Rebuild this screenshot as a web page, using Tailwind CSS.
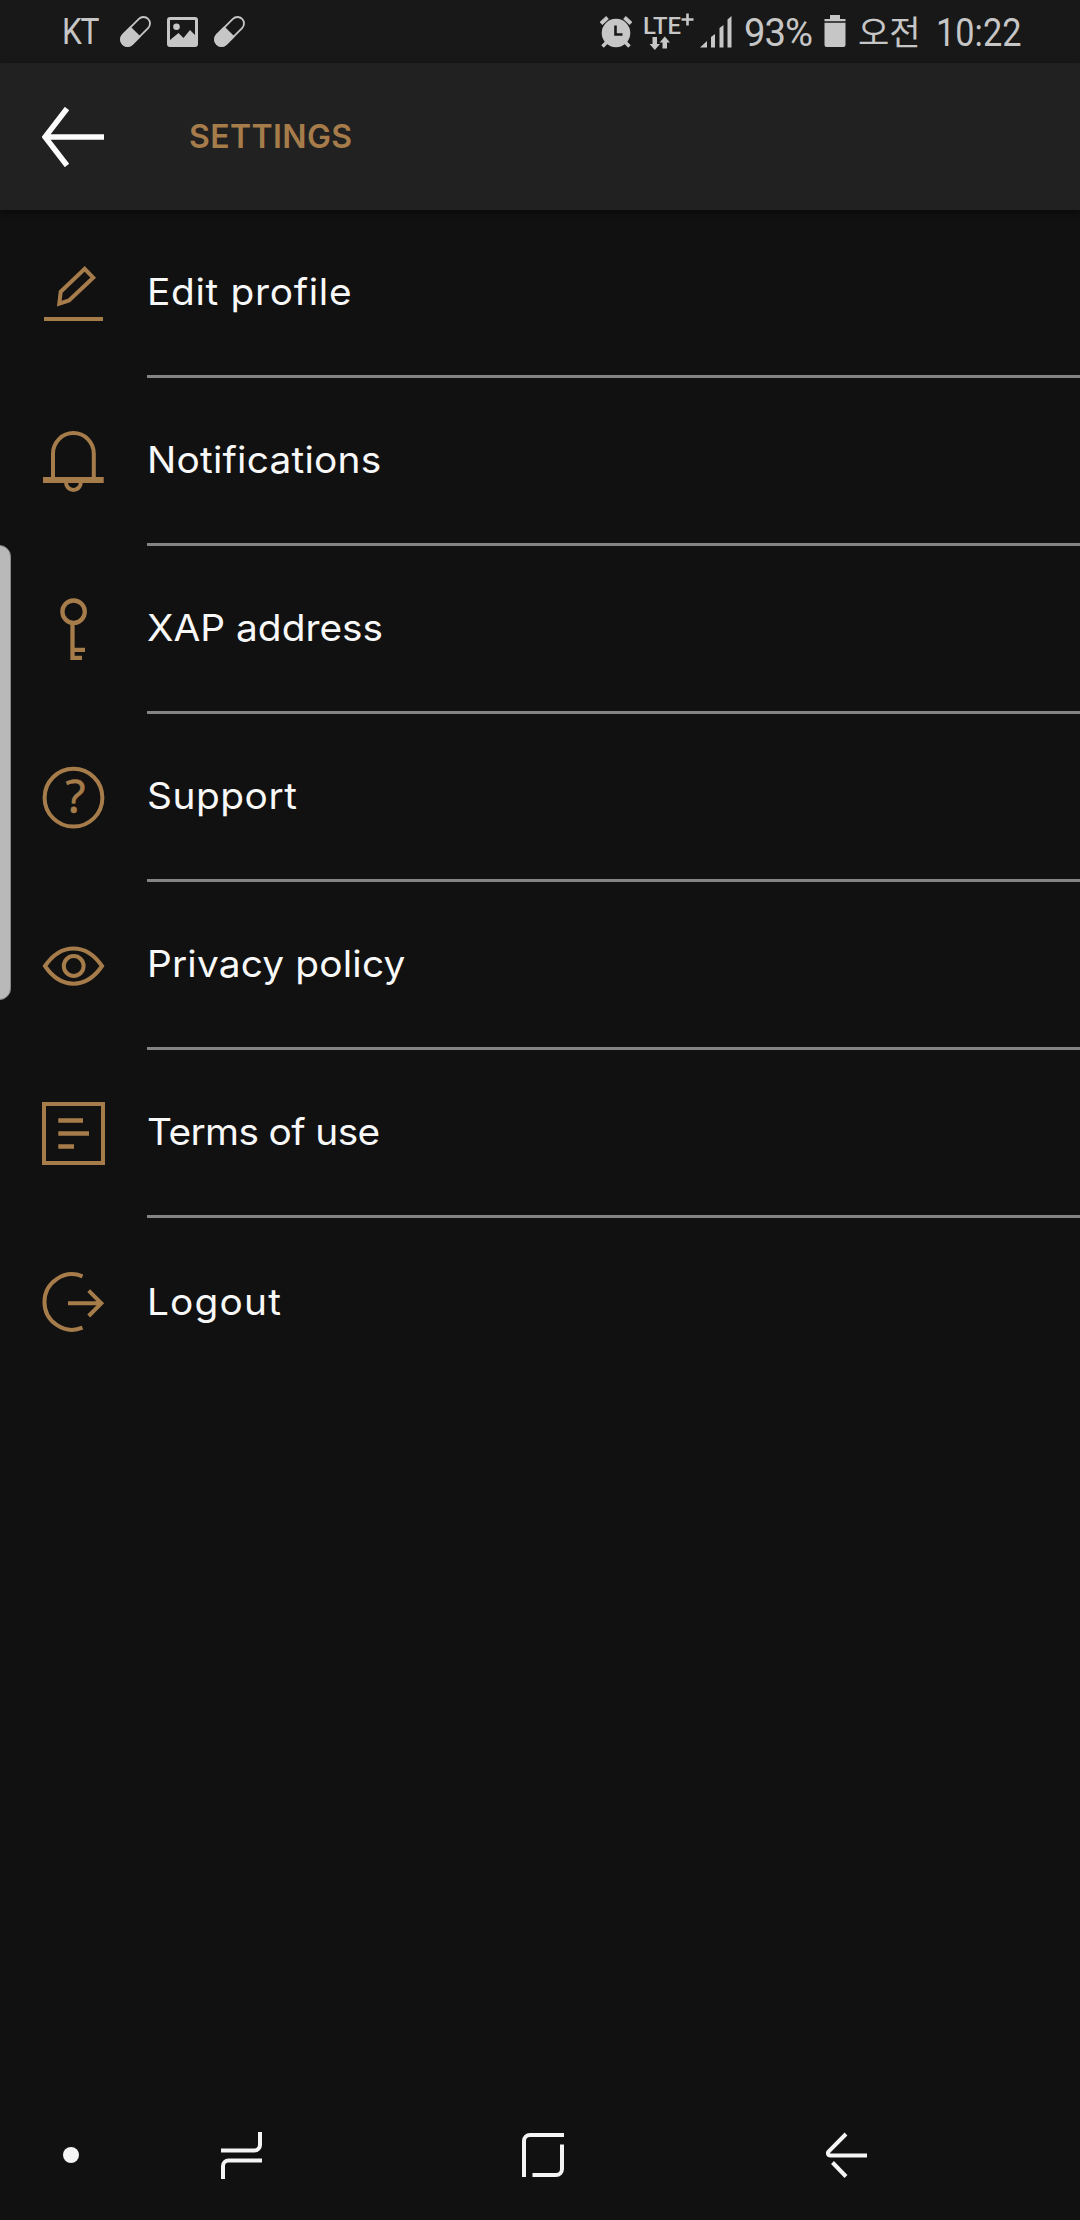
<!DOCTYPE html>
<html lang="en">
<head>
<meta charset="utf-8">
<title>Settings</title>
<script src="https://cdn.jsdelivr.net/npm/@tailwindcss/browser@4"></script>
</head>
<body class="bg-[#111111]">
<div class="relative flex h-[2220px] w-[1080px] flex-col overflow-hidden bg-[#111111] font-['Inter',sans-serif] text-[#f8f8f8]">

  <!-- Status bar -->
  <div class="flex h-[63px] shrink-0 items-center justify-between bg-[#181818] pr-[60px] pl-[62px] font-['Roboto','Noto_Sans_CJK_KR',sans-serif] text-[#c6c6c6]">
    <div class="flex items-center">
      <span class="w-[58px]"><span class="inline-block origin-left translate-y-px scale-x-[0.88] text-[36px] leading-[63px] font-normal tracking-[-1.5px]">KT</span></span>
      <svg class="h-[31px] w-[31px]" viewBox="0 0 31 31"><g transform="rotate(45 15.5 15.5)"><rect x="9" y="-2.3" width="13" height="35.6" rx="6.5" fill="none" stroke="#c6c6c6" stroke-width="1.8"/><path d="M8 15.5h15v11.2a7.5 7.5 0 0 1-15 0z" fill="#c6c6c6"/></g></svg>
      <svg class="ml-4 h-[30px] w-[31px]" viewBox="0 0 31 30"><path fill="#c6c6c6" fill-rule="evenodd" d="M3 0h25a3 3 0 0 1 3 3v24a3 3 0 0 1-3 3H3a3 3 0 0 1-3-3V3a3 3 0 0 1 3-3zM3 3v20l8.500-7 5 5 6.500-8 5 5V3z"/><circle cx="9.500" cy="9.700" r="3.300" fill="#c6c6c6"/></svg>
      <svg class="ml-4 h-[31px] w-[31px]" viewBox="0 0 31 31"><g transform="rotate(45 15.5 15.5)"><rect x="9" y="-2.3" width="13" height="35.6" rx="6.5" fill="none" stroke="#c6c6c6" stroke-width="1.8"/><path d="M8 15.5h15v11.2a7.5 7.5 0 0 1-15 0z" fill="#c6c6c6"/></g></svg>
    </div>
    <div class="flex items-center">
      <svg class="h-[32px] w-[32px]" viewBox="0 0 32 32"><g stroke="#c6c6c6" stroke-width="4" fill="none"><path d="M1 7.500 7.500 1.500M24.500 1.500 31 7.500"/><path stroke-width="3.500" d="M2.500 30.500 7 26M29.500 30.500 25 26"/></g><circle cx="16" cy="17" r="14.300" fill="#c6c6c6"/><path d="M15.500 9.500v9h7" fill="none" stroke="#181818" stroke-width="2.600"/></svg>
      <svg class="ml-[11px] h-[38px] w-[52px]" viewBox="0 0 52 38"><text x="0" y="21" font-family="Roboto" font-size="24" font-weight="500" fill="#c6c6c6" textLength="38" lengthAdjust="spacingAndGlyphs">LTE</text><path d="M38.500 6.500h12M44.500 .5v12" stroke="#c6c6c6" stroke-width="2.600"/><path fill="#c6c6c6" d="M9.500 24h4.500v7h3l-5.200 6-5.200-6h2.900zM19.500 35.500h4.500v-6h3l-5.200-6-5.200 6h2.900z"/></svg>
      <svg class="ml-[5px] h-[32px] w-[32px]" viewBox="0 0 32 32" fill="#c6c6c6"><path d="M0 31.500 7 25v6.500zM11 21l4-3v13.500h-4zM19.500 12l4-3v22.500h-4zM27.500 3.500 31.500 0v31.500h-4z"/></svg>
      <span class="ml-[12px] w-[80px] whitespace-nowrap"><span class="inline-block origin-left translate-y-[2px] scale-x-[0.98] text-[39px] leading-[63px] font-normal tracking-[-1px]">93%</span></span>
      <svg class="h-[33px] w-[22px]" viewBox="0 0 22 33" fill="#c6c6c6"><path d="M6 0h10v4h5.500v2.300H.5V4H6zM.5 7.700h21V30a2 2 0 0 1-2 2h-17a2 2 0 0 1-2-2z"/></svg>
      <span class="ml-[12px] w-[78px] text-[34px] leading-[63px] whitespace-nowrap"><span class="inline-block translate-y-[2px]">오전</span></span>
      <span class="w-[84px] whitespace-nowrap"><span class="inline-block origin-left translate-y-[2px] scale-x-[0.88] text-[39px] leading-[63px] font-normal">10:22</span></span>
    </div>
  </div>

  <!-- App bar -->
  <header class="z-10 flex h-[147px] shrink-0 items-center bg-[#212121] pl-[42px] shadow-[0_3px_6px_rgba(0,0,0,0.5)]">
    <svg class="h-[60px] w-[62px]" viewBox="0 0 62 60" fill="none" stroke="#fcfcfc" stroke-width="5.500"><path d="M25 1.500 3 30l22 28.500M4 30h58"/></svg>
    <h1 class="ml-[85px] pt-px text-[32px] leading-none font-semibold tracking-[0.4px] text-[#a67c4b]">SETTINGS</h1>
  </header>

  <!-- Settings list -->
  <ul class="flex flex-col text-[37px] leading-none">
    <li class="flex h-[168px] pl-[42px]">
      <svg class="mt-[52px] h-[63px] w-[63px]" viewBox="0 0 63 63" fill="none" stroke="#a67c4b" stroke-width="4"><path d="M42.700 6.800 51.200 15.600 27 38.400 17.300 41.700 18.700 29.700zM2 57h59"/></svg>
      <div class="ml-[42px] flex flex-1 items-center border-b-3 border-[#848484] pb-0.5"><span class="origin-left scale-x-[1.05] tracking-[0.65px]">Edit profile</span></div>
    </li>
    <li class="flex h-[168px] pl-[42px]">
      <svg class="mt-[52px] h-[63px] w-[63px]" viewBox="0 0 63 63" fill="none" stroke="#a67c4b" stroke-width="4"><path d="M11 48V23.500a20.400 20.400 0 0 1 40.800 0V48M24 52v.5a7.400 7.400 0 0 0 14.800 0V52"/><path stroke-width="6" d="M1 50h60.700"/></svg>
      <div class="ml-[42px] flex flex-1 items-center border-b-3 border-[#848484] pb-0.5"><span class="origin-left scale-x-[1.05] tracking-[0.2px]">Notifications</span></div>
    </li>
    <li class="flex h-[168px] pl-[42px]">
      <svg class="mt-[52px] h-[63px] w-[63px]" viewBox="0 0 63 63" fill="none" stroke="#a67c4b" stroke-width="4.300"><circle cx="31.600" cy="13.700" r="11.200"/><path d="M30.500 25v37M30.500 51.800H43M30.500 59.800H40"/></svg>
      <div class="ml-[42px] flex flex-1 items-center border-b-3 border-[#848484] pb-0.5"><span class="origin-left scale-x-[1.05]">XAP address</span></div>
    </li>
    <li class="flex h-[168px] pl-[42px]">
      <svg class="mt-[52px] h-[63px] w-[63px] overflow-visible" viewBox="0 0 63 63" fill="none" stroke="#a67c4b" stroke-width="4"><circle cx="31.500" cy="31.700" r="28.900"/><text x="33.500" y="47.300" text-anchor="middle" font-family="Noto Sans" font-size="46" fill="#a67c4b" stroke-width="0.500">?</text></svg>
      <div class="ml-[42px] flex flex-1 items-center border-b-3 border-[#848484] pb-0.5"><span class="origin-left scale-x-[1.05] tracking-[0.5px]">Support</span></div>
    </li>
    <li class="flex h-[168px] pl-[42px]">
      <svg class="mt-[52px] h-[63px] w-[63px]" viewBox="0 0 63 63" fill="none" stroke="#a67c4b" stroke-width="4"><path d="M3 32C19 8.500 44 8.500 60 32 44 55.500 19 55.500 3 32z"/><circle cx="31.700" cy="32" r="9.900"/></svg>
      <div class="ml-[42px] flex flex-1 items-center border-b-3 border-[#848484] pb-0.5"><span class="origin-left scale-x-[1.05] tracking-[0.15px]">Privacy policy</span></div>
    </li>
    <li class="flex h-[168px] pl-[42px]">
      <svg class="mt-[52px] h-[63px] w-[63px]" viewBox="0 0 63 63" fill="none" stroke="#a67c4b" stroke-width="4"><path d="M2 2h59v59H2z"/><path stroke-width="4.500" d="M16.300 18.600H41M16.300 31.500H47M16.300 44.500H32"/></svg>
      <div class="ml-[42px] flex flex-1 items-center border-b-3 border-[#848484] pb-0.5"><span class="origin-left scale-x-[1.05] tracking-[-0.6px]">Terms of use</span></div>
    </li>
    <li class="flex h-[168px] pl-[42px]">
      <svg class="mt-[53px] h-[63px] w-[63px]" viewBox="0 0 63 63" fill="none" stroke="#a67c4b" stroke-width="4"><path d="M40.500 5.300A27.700 27.700 0 1 0 40.500 56.700M26 32.300h33M46.700 19.700 59.300 32.300 46.700 45"/></svg>
      <div class="ml-[42px] flex flex-1 items-center pb-0.5"><span class="origin-left scale-x-[1.05] tracking-[1.1px]">Logout</span></div>
    </li>
  </ul>

  <!-- Navigation bar -->
  <nav class="mt-auto flex h-[130px] items-center pl-[63px]">
    <span class="h-[16px] w-[16px] rounded-full bg-[#f5f5f5]"></span>
    <svg class="ml-[142px] h-[47px] w-[41px]" viewBox="0 0 41 47" fill="none" stroke="#f5f5f5" stroke-width="4"><path d="M0 18.500h33.500a5.500 5.500 0 0 0 5.500-5.500V0M2 47V34a5.500 5.500 0 0 1 5.500-5.500H41"/></svg>
    <svg class="ml-[260px] h-[44px] w-[42px]" viewBox="0 0 42 44" fill="none" stroke="#f5f5f5" stroke-width="4"><path d="M2 44V8a6 6 0 0 1 6-6h34M40 11.500V36a6 6 0 0 1-6 6H10.500"/></svg>
    <svg class="ml-[262px] h-[46px] w-[41px]" viewBox="0 0 41 46" fill="none" stroke="#f5f5f5" stroke-width="4"><path d="M20 2 2.800 19.300C1 21.300 2 23.500 4.500 23.500H41M6.500 30.500 20 44.500"/></svg>
  </nav>

  <!-- Edge panel handle, lies over the list -->
  <div class="absolute top-[545px] left-[-12px] h-[455px] w-[23px] rounded-[14px] border border-[#8a8a8a] bg-[#b9b9b9]"></div>
</div>
</body>
</html>
